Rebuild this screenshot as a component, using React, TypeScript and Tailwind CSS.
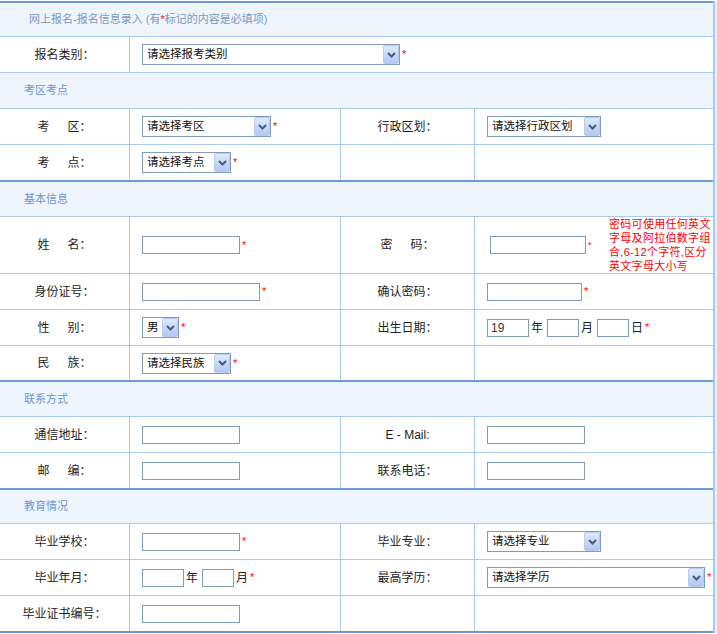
import React from "react";

const Star = () => (
  <span className="ml-[2px] text-[11px] leading-none text-[#ff0000]">*</span>
);

const Chevron = () => (
  <svg width="9" height="6" viewBox="0 0 9 6">
    <path d="M1 1 L4.5 4.5 L8 1" fill="none" stroke="#4a5a7c" strokeWidth="2" />
  </svg>
);

function Sel({ w, text }: { w: string; text: string }) {
  return (
    <div className={`relative h-[21px] ${w} shrink-0 border border-[#7f9db9] bg-white`}>
      <div className="pl-[4px] text-[11.5px] leading-[19px] text-[#111] whitespace-nowrap">{text}</div>
      <div className="absolute right-0 top-0 bottom-0 flex w-[16px] items-center justify-center rounded-[2px] border border-[#b7cbf0] bg-gradient-to-b from-[#dde9fe] to-[#b2c8f3]">
        <Chevron />
      </div>
    </div>
  );
}

function Txt({ w, value = "" }: { w: string; value?: string }) {
  return (
    <input
      readOnly
      value={value}
      className={`h-[18px] ${w} shrink-0 border border-[#7f9db9] bg-white px-[3px] text-[12px] text-[#333] outline-none`}
    />
  );
}

const Sp = () => <span className="inline-block w-[18px]" />;

function Row({
  h,
  a,
  b,
  c,
  d,
  span,
  extra = "border-b border-b-[#a9caf0]",
}: {
  h: string;
  a: React.ReactNode;
  b?: React.ReactNode;
  c?: React.ReactNode;
  d?: React.ReactNode;
  span?: boolean;
  extra?: string;
}) {
  return (
    <div className={`flex ${h} ${extra} text-[12px] text-[#1e1e1e]`}>
      <div className="flex w-[130px] shrink-0 items-center justify-center border-r border-[#a9caf0]">{a}</div>
      {span ? (
        <div className="flex flex-1 items-center pl-[12px]">{b}</div>
      ) : (
        <>
          <div className="flex w-[211px] shrink-0 items-center border-r border-[#a9caf0] pl-[12px]">{b}</div>
          <div className="flex w-[134px] shrink-0 items-center justify-center border-r border-[#a9caf0]">{c}</div>
          <div className="flex min-w-0 flex-1 items-center pl-[12px]">{d}</div>
        </>
      )}
    </div>
  );
}

function Section({ title, dark, h }: { title: string; dark?: boolean; h: string }) {
  return (
    <div
      className={`flex ${h} items-center bg-[#eef5fd] pl-[24px] text-[11px] text-[#6e96cf] border-b border-b-[#a9caf0] ${
        dark ? "-mt-px border-t-2 border-t-[#6a9bd6]" : ""
      }`}
    >
      {title}
    </div>
  );
}

export default function App() {
  return (
    <div className="flex bg-white pt-[1px] font-['Liberation_Sans','Noto_Sans_CJK_SC',sans-serif]">
      <div className="w-[715px] shrink-0 border-r-2 border-r-[#a9caf0]">
        <div className="flex h-[36px] items-center border-t-2 border-t-[#6a9bd6] border-b border-b-[#a9caf0] bg-[#eef5fd] pl-[29px] text-[11px] text-[#8098bb]">
          网上报名-报名信息录入 (有<span className="text-[#ff0000]">*</span>标记的内容是必填项)
        </div>
        <Row h="h-[36px]" span a="报名类别：" b={<><Sel w="w-[258px]" text="请选择报考类别" /><Star /></>} />
        <Section title="考区考点" h="h-[36px]" />
        <Row
          h="h-[36px]"
          a={<>考<Sp />区：</>}
          b={<><Sel w="w-[129px]" text="请选择考区" /><Star /></>}
          c="行政区划："
          d={<Sel w="w-[114px]" text="请选择行政区划" />}
        />
        <Row h="h-[36px]" a={<>考<Sp />点：</>} b={<><Sel w="w-[89px]" text="请选择考点" /><Star /></>} />
        <Section title="基本信息" dark h="h-[37px]" />
        <Row
          h="h-[57px]"
          a={<>姓<Sp />名：</>}
          b={<><Txt w="w-[98px]" /><Star /></>}
          c={<>密<Sp />码：</>}
          d={
            <div className="flex w-full items-center">
              <div className="ml-[3px] flex items-center">
                <Txt w="w-[96px]" />
                <span className="ml-[2px] text-[9px] leading-none text-[#ff0000]">*</span>
              </div>
              <div className="ml-auto w-[104px] text-[11px] leading-[14px] tracking-[0.3px] text-[#ff0000]">
                密码可使用任何英文<br />字母及阿拉伯数字组<br />合,6-12个字符,区分<br />英文字母大小写
              </div>
            </div>
          }
        />
        <Row
          h="h-[36px]"
          a="身份证号："
          b={<><Txt w="w-[118px]" /><Star /></>}
          c="确认密码："
          d={<><Txt w="w-[95px]" /><Star /></>}
        />
        <Row
          h="h-[36px]"
          a={<>性<Sp />别：</>}
          b={<><Sel w="w-[37px]" text="男" /><Star /></>}
          c="出生日期："
          d={
            <>
              <Txt w="w-[42px]" value="19" />
              <span className="ml-[2px] mr-[4px]">年</span>
              <Txt w="w-[32px]" />
              <span className="ml-[2px] mr-[4px]">月</span>
              <Txt w="w-[32px]" />
              <span className="ml-[2px]">日</span>
              <Star />
            </>
          }
        />
        <Row h="h-[35px]" a={<>民<Sp />族：</>} b={<><Sel w="w-[89px]" text="请选择民族" /><Star /></>} />
        <Section title="联系方式" dark h="h-[37px]" />
        <Row h="h-[36px]" a="通信地址：" b={<Txt w="w-[98px]" />} c="E - Mail:" d={<Txt w="w-[98px]" />} />
        <Row h="h-[36px]" a={<>邮<Sp />编：</>} b={<Txt w="w-[98px]" />} c="联系电话：" d={<Txt w="w-[98px]" />} />
        <Section title="教育情况" dark h="h-[36px]" />
        <Row
          h="h-[36px]"
          a="毕业学校："
          b={<><Txt w="w-[98px]" /><Star /></>}
          c="毕业专业："
          d={<Sel w="w-[114px]" text="请选择专业" />}
        />
        <Row
          h="h-[36px]"
          a="毕业年月："
          b={
            <>
              <Txt w="w-[42px]" />
              <span className="ml-[2px] mr-[4px]">年</span>
              <Txt w="w-[32px]" />
              <span className="ml-[2px]">月</span>
              <Star />
            </>
          }
          c="最高学历："
          d={<><Sel w="w-[218px]" text="请选择学历" /><Star /></>}
        />
        <Row
          h="h-[37px]"
          a="毕业证书编号："
          b={<Txt w="w-[98px]" />}
          extra="border-b-2 border-b-[#6a9bd6]"
        />
      </div>
      <div className="w-[2px] self-stretch bg-[#efefef]" />
    </div>
  );
}
